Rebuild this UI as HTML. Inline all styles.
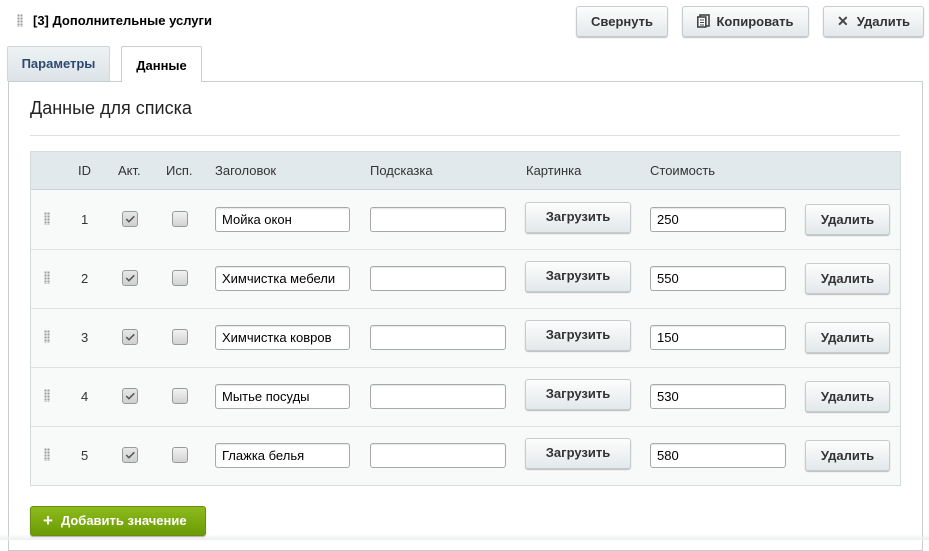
<!DOCTYPE html>
<html><head><meta charset="utf-8"><style>
*{box-sizing:border-box;margin:0;padding:0}
body{width:929px;height:540px;background:#fff;font-family:"Liberation Sans",Arial,sans-serif;font-size:13px;color:#000;position:relative;overflow:hidden}
.a{position:absolute}
.btn{position:absolute;border:1px solid #c5cbce;border-radius:3px;background:linear-gradient(#fdfdfd,#e3e8ea);box-shadow:0 1px 1px rgba(0,0,0,.25);font-weight:bold;color:#333;font-size:13px;text-align:center}
.inp{position:absolute;border:1px solid #a5a9ab;border-radius:3px;background:#fff;height:25px;padding-left:6px;line-height:23px;font-size:13px;box-shadow:inset 0 1px 1px rgba(0,0,0,.1)}
.cb{position:absolute;width:15px;height:15px;border:1px solid #999;border-radius:3px;background:linear-gradient(#f2f2f2,#d2d2d2)}
.drag{position:absolute;width:6px;height:13px;background-image:radial-gradient(circle,#9a9a9a 55%,transparent 60%);background-size:3px 3px}
.th{position:absolute;top:163px;color:#333;font-size:13px}
</style></head><body>
<div class="drag" style="left:17px;top:14px"></div>
<div class="a" style="left:33px;top:13px;font-weight:bold;font-size:13px">[3] Дополнительные услуги</div>
<div class="btn" style="left:576px;top:6px;width:92px;height:31px;line-height:29px">Свернуть</div>
<div class="btn" style="left:682px;top:6px;width:127px;height:31px;line-height:29px"><svg width="13" height="14" style="vertical-align:-2px;margin-right:6px" viewBox="0 0 13 14"><rect x="3" y="1" width="9" height="11" fill="none" stroke="#444" stroke-width="1.6"/><rect x="0.8" y="3" width="8" height="10" fill="#fff" stroke="#444" stroke-width="1.6"/><path d="M3 6h4M3 8.5h4M3 11h4" stroke="#444"/></svg>Копировать</div>
<div class="btn" style="left:823px;top:6px;width:101px;height:31px;line-height:29px"><span style="font-size:14px;margin-right:8px;color:#444">✕</span>Удалить</div>
<div class="a" style="left:7px;top:46px;width:103px;height:35px;background:linear-gradient(#eef2f4,#dce3e7);border:1px solid #d0d6d9;border-bottom:none;color:#2d4a73;font-weight:bold;line-height:34px;text-align:center;border-radius:2px 2px 0 0">Параметры</div>
<div class="a" style="left:8px;top:81px;width:915px;height:470px;border:1px solid #c8cdd0"></div>
<div class="a" style="left:0;top:534px;width:929px;height:6px;background:linear-gradient(rgba(255,255,255,0),#eceeef)"></div>
<div class="a" style="left:121px;top:46px;width:81px;height:36px;background:#fff;border:1px solid #c8cdd0;border-bottom:none;font-weight:bold;line-height:38px;text-align:center;border-radius:2px 2px 0 0">Данные</div>
<div class="a" style="left:30px;top:98px;font-size:18px;color:#222">Данные для списка</div>
<div class="a" style="left:30px;top:135px;width:870px;height:1px;background:#dde1e3"></div>
<div class="a" style="left:30px;top:151px;width:871px;height:335px;border:1px solid #d5dadd;background:#f8f9f9"></div>
<div class="a" style="left:31px;top:152px;width:869px;height:38px;background:#e2e9ec;border-bottom:1px solid #ccd3d6"></div>
<div class="th" style="left:78px">ID</div>
<div class="th" style="left:118px">Акт.</div>
<div class="th" style="left:166px">Исп.</div>
<div class="th" style="left:215px">Заголовок</div>
<div class="th" style="left:370px">Подсказка</div>
<div class="th" style="left:526px">Картинка</div>
<div class="th" style="left:650px">Стоимость</div>
<script>
var d=[["1","Мойка окон","250"],["2","Химчистка мебели","550"],["3","Химчистка ковров","150"],["4","Мытье посуды","530"],["5","Глажка белья","580"]];
var h="";
d.forEach(function(r,i){var t=190+i*59;
if(i>0)h+='<div class="a" style="left:31px;top:'+t+'px;width:869px;height:1px;background:#dde1e3"></div>';
h+='<div class="drag" style="left:44px;top:'+(t+22)+'px"></div>';
h+='<div class="a" style="left:81px;top:'+(t+22)+'px;color:#333">'+r[0]+'</div>';
h+='<div class="cb" style="left:122px;top:'+(t+21)+'px;width:16px;height:16px;background:linear-gradient(#e6e6e6,#d0d0d0)"><svg width="14" height="14" viewBox="0 0 13 13" style="position:absolute;left:0;top:0"><path d="M3 6.5l2.5 2.5 5-5" fill="none" stroke="#555" stroke-width="1.4"/></svg></div>';
h+='<div class="cb" style="left:172px;top:'+(t+21)+'px;width:16px;height:16px"></div>';
h+='<div class="inp" style="left:215px;top:'+(t+17)+'px;width:135px">'+r[1]+'</div>';
h+='<div class="inp" style="left:370px;top:'+(t+17)+'px;width:136px"></div>';
h+='<div class="btn" style="left:525px;top:'+(t+12)+'px;width:106px;height:31px;line-height:27px">Загрузить</div>';
h+='<div class="inp" style="left:650px;top:'+(t+17)+'px;width:136px">'+r[2]+'</div>';
h+='<div class="btn" style="left:805px;top:'+(t+14)+'px;width:85px;height:31px;line-height:29px">Удалить</div>';
});
document.write(h);
</script>
<div class="a" style="left:30px;top:506px;width:176px;height:30px;border-radius:3px;background:linear-gradient(#8dbb1c,#6b9a05);border:1px solid #6a8f10;color:#fff;font-weight:bold;font-size:13px;line-height:28px;padding-left:12px;box-shadow:0 1px 1px rgba(0,0,0,.3)"><span style="font-size:17px;margin-right:8px;vertical-align:-1px">+</span>Добавить значение</div>
</body></html>
